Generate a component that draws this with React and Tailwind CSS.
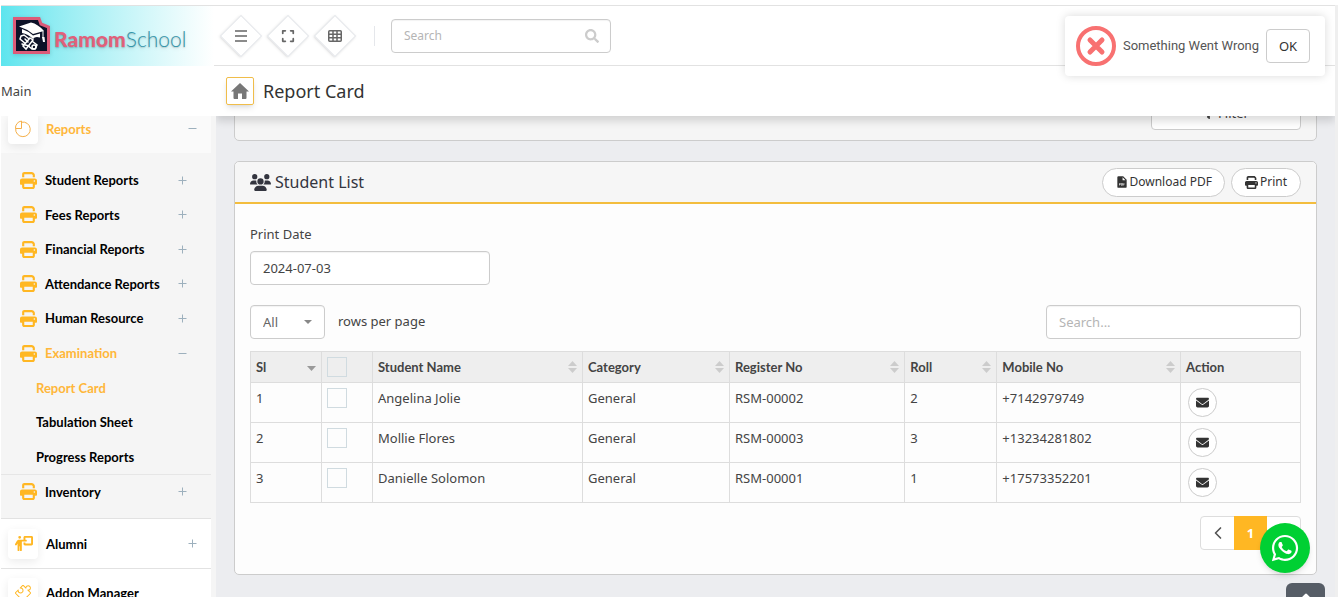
import React from 'react'
import { FaUsers, FaPrint, FaWhatsapp, FaEnvelope, FaPersonChalkboard, FaExpand } from 'react-icons/fa6'
import { FaSearch, FaFilter } from 'react-icons/fa'
import { BiSolidFilePdf } from 'react-icons/bi'
import { SlPuzzle } from 'react-icons/sl'
import { LuChevronLeft, LuChevronRight, LuChevronUp } from 'react-icons/lu'

const subMenu = [
  { name: 'Student Reports', sign: '+' },
  { name: 'Fees Reports', sign: '+' },
  { name: 'Financial Reports', sign: '+' },
  { name: 'Attendance Reports', sign: '+' },
  { name: 'Human Resource', sign: '+' },
  { name: 'Examination', sign: '-', active: true },
  { name: 'Report Card', child: true, active: true },
  { name: 'Tabulation Sheet', child: true },
  { name: 'Progress Reports', child: true },
]

const students = [
  { sl: 1, name: 'Angelina Jolie', category: 'General', register: 'RSM-00002', roll: 2, mobile: '+7142979749' },
  { sl: 2, name: 'Mollie Flores', category: 'General', register: 'RSM-00003', roll: 3, mobile: '+13234281802' },
  { sl: 3, name: 'Danielle Solomon', category: 'General', register: 'RSM-00001', roll: 1, mobile: '+17573352201' },
]

const Logo = () => (
  <a href="#home" className="w-[213px] h-[60px] shrink-0 pl-3 flex items-center gap-1 bg-linear-to-r from-[#5ce5ee] to-white">
    <svg width="37" height="37" viewBox="0 0 37 37" className="shrink-0 drop-shadow-sm">
      <path d="M1.500 1.500H26L28 7L35.500 10V35.500H1.500Z" fill="#0d1228" stroke="#dc5b78" strokeWidth="3" />
      <path d="M6 9.500L18 5.500Q25 7 31 14L20 17Q14 12 6 9.500Z" fill="#fff" />
      <path d="M9 12Q15 14 20 18.500L27 16.500V20.500Q22 19 20 22Q15 17 9 16Z" fill="#fff" />
      <path d="M30 14V21" stroke="#fff" strokeWidth="1" />
      <path d="M29 20H31.500L32 25H30Z" fill="#fff" />
      <g stroke="#fff" strokeWidth="1.500" fill="none" strokeLinecap="round">
        <path d="M8 19L11 18L24 28L22 32L19 32L7 22Z" />
        <path d="M17 21L20 23L13 32L10 29Z" fill="#0d1228" />
        <path d="M12 22L15 25M9 27L16 29" />
        <circle cx="21" cy="30" r="2" />
      </g>
    </svg>
    <span className="pt-1.5 font-['Lato',sans-serif] text-[21px] leading-6 text-[#3495aa] font-light text-shadow-md">
      <b className="font-black text-[#e0607a]">Ramom</b>School
    </span>
  </a>
)

const MenuIcon = () => (
  <svg width="12" height="12" viewBox="0 0 12 12" stroke="currentColor" strokeWidth="1.500">
    <path d="M0 1H12M0 6H12M0 11H12" />
  </svg>
)

const GridIcon = () => (
  <svg width="14" height="12" viewBox="0 0 14 12" fill="none" stroke="currentColor" strokeWidth="1.500">
    <rect x="0.750" y="0.750" width="12.500" height="10.500" rx="1" />
    <path d="M5 1V11M9 1V11M1 4.250H13M1 7.750H13" />
  </svg>
)

const HomeIcon = () => (
  <svg width="18" height="16" viewBox="0 0 18 16" fill="currentColor">
    <path d="M9 0L18 8.500H15.500V15Q15.500 16 14.500 16H11V10.500H7V16H3.500Q2.500 16 2.500 15V8.500H0Z" />
  </svg>
)

const Diamond = ({ label, children }) => (
  <button aria-label={label} className="size-[30px] rotate-45 border border-gray-200 bg-white shadow-sm flex items-center justify-center">
    <span className="-rotate-45 text-[#666]">{children}</span>
  </button>
)

const Header = () => (
  <header className="h-[61px] shrink-0 flex items-center border-y border-[#e2e2e2] bg-white">
    <Logo />
    <div className="flex items-center gap-[17px] ml-3">
      <Diamond label="Menu"><MenuIcon /></Diamond>
      <Diamond label="Full screen"><FaExpand size={14} /></Diamond>
      <Diamond label="Shortcuts"><GridIcon /></Diamond>
    </div>
    <div className="w-px h-5 bg-gray-200 ml-6 mr-4" />
    <label className="w-[220px] h-[34px] pl-3 pr-[11px] flex items-center border border-[#ccc] rounded-sm inset-shadow-xs">
      <input aria-label="Search" placeholder="Search" className="w-full text-xs outline-none placeholder:text-[#b5b5b5]" />
      <FaSearch size={14} className="shrink-0 text-[#ccc]" />
    </label>
  </header>
)

const PieIcon = () => (
  <svg width="18" height="18" viewBox="0 0 18 18" fill="none" stroke="#f5b04a" strokeWidth="1">
    <path d="M7.500 2.200A7.300 7.300 0 1 1 1.700 8.500" />
    <path d="M7.500 1V8.500H1.500A7 7 0 0 1 7.500 1Z" />
  </svg>
)

const IconBox = ({ children }) => (
  <span className="size-[30px] shrink-0 rounded-sm bg-white shadow-[0_3px_10px_rgba(0,0,0,0.08)] flex items-center justify-center text-[#ffb723]">{children}</span>
)

const Sign = ({ open }) => (
  <svg width="9" height="9" viewBox="0 0 9 9" stroke="#9db0bd" strokeWidth="1" className="shrink-0">
    <path d={open ? 'M0.500 4.500H8.500' : 'M0.500 4.500H8.500M4.500 0.500V8.500'} />
  </svg>
)

const Sidebar = () => (
  <nav className="grow min-h-0 overflow-hidden bg-[#f5f5f5] font-['Lato',sans-serif] font-bold text-black">
    <div className="w-[210px]">
      <a href="#reports" className="h-[37px] pl-[7px] pr-3.5 pb-3 flex items-center gap-2 bg-[#fafafa] text-[#ffb73a]">
        <IconBox><PieIcon /></IconBox>
        <span className="grow">Reports</span>
        <Sign open />
      </a>
      <ul className="h-[311px] mt-2.5 grid auto-rows-fr">
        {subMenu.map(item => (
          <li key={item.name}>
            <a href="#menu" className={`h-full pr-6 flex items-center ${item.child ? 'pl-[35px]' : 'pl-[19px]'} ${item.active ? 'text-[#ffb73a]' : ''}`}>
              {!item.child ? <FaPrint size={17} className="mr-2 text-[#ffb723]" /> : null}
              <span className="grow">{item.name}</span>
              {item.sign ? <Sign open={item.sign === '-'} /> : null}
            </a>
          </li>
        ))}
      </ul>
      <a href="#inventory" className="h-[44px] pl-[19px] pr-6 pb-2.5 flex items-center border-t border-[#e6e6e6]">
        <FaPrint size={17} className="mr-2 text-[#ffb723]" />
        <span className="grow">Inventory</span>
        <Sign />
      </a>
      <a href="#alumni" className="h-[50px] pl-[7px] pr-3.5 flex items-center gap-2 bg-white border-t border-[#e2e2e2]">
        <IconBox><FaPersonChalkboard size={19} /></IconBox>
        <span className="grow">Alumni</span>
        <Sign />
      </a>
      <a href="#addon" className="h-12 pl-[7px] pr-3.5 flex items-center gap-2 bg-white border-t border-[#e2e2e2]">
        <IconBox><SlPuzzle size={16} /></IconBox>
        <span className="grow">Addon Manager</span>
      </a>
    </div>
  </nav>
)

const SortIcon = ({ down }) => (
  <svg width="9" height="12" viewBox="0 0 9 12" className="shrink-0">
    {!down ? <path d="M0 5L4.500 0L9 5Z" fill="#ccc" /> : null}
    {down ? <path d="M0 5L4.500 10L9 5Z" fill="#999" /> : <path d="M0 7L4.500 12L9 7Z" fill="#ccc" />}
  </svg>
)

const Th = ({ children, width, sort }) => (
  <th className={`h-[31px] px-[5px] border border-[#ddd] text-left font-bold ${width}`}>
    <div className="flex items-center justify-between">
      {children}
      {sort ? <SortIcon down={sort === 'down'} /> : null}
    </div>
  </th>
)

const Check = ({ label }) => (
  <input type="checkbox" aria-label={label} className="block size-5 appearance-none border border-[#d0dbe0] bg-transparent" />
)

const StudentTable = () => (
  <table className="w-full table-fixed border-collapse">
    <thead className="bg-[#eee] font-['Lato',sans-serif]">
      <tr>
        <Th width="w-[71px]" sort="down">Sl</Th>
        <Th width="w-[51px]"><Check label="Select all" /></Th>
        <Th width="w-[20%]" sort="both">Student Name</Th>
        <Th width="w-[14%]" sort="both">Category</Th>
        <Th width="w-[16.700%]" sort="both">Register No</Th>
        <Th width="w-[92px]" sort="both">Roll</Th>
        <Th width="w-[17.500%]" sort="both">Mobile No</Th>
        <Th width="w-auto">Action</Th>
      </tr>
    </thead>
    <tbody>
      {students.map(student => (
        <tr key={student.sl} className="h-10 align-top *:border *:border-[#ddd] *:px-[5px] *:py-[5px]">
          <td>{student.sl}</td>
          <td><Check label={`Select ${student.name}`} /></td>
          <td>{student.name}</td>
          <td>{student.category}</td>
          <td>{student.register}</td>
          <td>{student.roll}</td>
          <td>{student.mobile}</td>
          <td>
            <button aria-label="Send email" className="size-[29px] ml-0.5 rounded-full border border-[#ccc] bg-white flex items-center justify-center text-[#333]">
              <FaEnvelope size={13} />
            </button>
          </td>
        </tr>
      ))}
    </tbody>
  </table>
)

const Pagination = () => (
  <div className="mt-[13px] flex justify-end">
    <div className="w-[101px] h-[34px] grid grid-cols-3 border border-[#ddd] rounded-sm bg-white text-[#555]">
      <button aria-label="Previous page" className="flex items-center justify-center"><LuChevronLeft size={20} /></button>
      <button className="-my-px bg-[#ffb723] text-white font-bold">1</button>
      <button aria-label="Next page" className="flex items-center justify-center"><LuChevronRight size={20} /></button>
    </div>
  </div>
)

const StudentList = () => (
  <section className="border border-[#ccc] rounded-[5px] bg-[#fdfdfd]">
    <div className="h-[42px] px-[15px] flex items-center border-b-2 border-[#f3bd3e] bg-[#f6f6f6] rounded-t-[5px]">
      <FaUsers size={21} className="mr-1 text-[#33353f]" />
      <h2 className="grow text-base text-[#33353f]">Student List</h2>
      <div className="flex gap-1.5 text-xs text-[#333]">
        <button className="h-[29px] px-3 flex items-center rounded-full border border-[#ccc] bg-white"><BiSolidFilePdf size={14} />Download PDF</button>
        <button className="h-[29px] px-[13px] flex items-center gap-0.5 rounded-full border border-[#ccc] bg-white"><FaPrint size={13} />Print</button>
      </div>
    </div>
    <div className="px-[15px] pt-5 pb-6">
      <label htmlFor="print-date" className="block mb-[7px] leading-5">Print Date</label>
      <input id="print-date" defaultValue="2024-07-03" className="block w-[240px] h-[34px] px-3 border border-[#ccc] rounded-sm bg-white inset-shadow-xs" />
      <div className="mt-5 mb-3 flex items-center justify-between">
        <div className="flex items-center gap-[13px]">
          <div className="w-[75px] h-[34px] px-3 flex items-center border border-[#ccc] rounded-sm bg-white inset-shadow-xs">
            <select id="rows" className="grow appearance-none text-[#666] outline-none"><option>All</option></select>
            <svg width="8" height="4" viewBox="0 0 8 4"><path d="M0 0H8L4 4Z" fill="#888" /></svg>
          </div>
          <label htmlFor="rows" className="pb-0.5">rows per page</label>
        </div>
        <input aria-label="Search students" placeholder="Search..." className="w-[255px] h-[34px] px-3 border border-[#ccc] rounded-sm bg-white inset-shadow-xs placeholder:text-[#b5b5b5]" />
      </div>
      <StudentTable />
      <Pagination />
    </div>
  </section>
)

const FilterFooter = () => (
  <section className="-mt-9 mb-5 h-[61px] pl-4 pr-[15px] pb-2.5 flex items-end justify-end border border-[#ccc] rounded-[5px] bg-[#f5f5f5]">
    <button className="w-[150px] h-[34px] flex items-center justify-center gap-1 border border-[#ccc] rounded-sm bg-white"><FaFilter size={11} />Filter</button>
  </section>
)

const Toast = () => (
  <div role="alert" className="absolute top-4 right-[13px] z-20 w-[260px] h-[60px] pl-[11px] pr-[15px] flex items-center justify-between rounded-sm bg-white shadow-[0_0_10px_rgba(0,0,0,0.15)]">
    <svg width="40" height="40" viewBox="0 0 40 40" fill="none" stroke="#f87171" className="shrink-0">
      <circle cx="20" cy="20" r="18" strokeWidth="4" />
      <path d="M14 14L26 26M26 14L14 26" strokeWidth="5" strokeLinecap="round" />
    </svg>
    <span className="font-['Roboto',sans-serif] text-[13px] text-[#555] whitespace-nowrap">Something Went Wrong</span>
    <button className="w-11 h-[34px] border border-[#ccc] rounded-sm bg-white text-[#333]">OK</button>
  </div>
)

const App = () => (
  <div className="relative h-screen overflow-hidden pt-[5px] pl-px flex flex-col bg-white font-['Noto_Sans',sans-serif] text-[13px] leading-5 text-[#444]">
    <div className="grow min-h-0 flex flex-col border-r-3 border-[#efefef]">
      <Header />
      <div className="grow min-h-0 flex">
        <div className="w-[215px] shrink-0 flex flex-col">
          <div className="h-[50px] shrink-0 flex items-center">Main</div>
          <Sidebar />
        </div>
        <div className="grow min-w-0 flex flex-col overflow-hidden">
          <div className="relative z-10 h-[50px] shrink-0 pl-2.5 flex items-center gap-[9px] bg-white shadow-[0_5px_8px_rgba(0,0,0,0.14)]">
            <a href="#home" aria-label="Home" className="size-7 flex items-center justify-center border border-[#f0bd4a] rounded-xs text-[#777] shadow-md"><HomeIcon /></a>
            <h1 className="text-lg text-[#333]">Report Card</h1>
          </div>
          <main className="grow min-h-0 overflow-hidden bg-[#ecedf0] px-[18px]">
            <FilterFooter />
            <StudentList />
          </main>
        </div>
      </div>
    </div>
    <Toast />
    <a href="#whatsapp" aria-label="WhatsApp" className="absolute right-7 bottom-6 size-[50px] rounded-full bg-[#00d033] text-white shadow-md flex items-center justify-center"><FaWhatsapp size={30} /></a>
    <a href="#top" aria-label="Back to top" className="absolute right-[13px] bottom-0 w-[39px] h-3.5 pt-1.5 overflow-hidden rounded-t-md bg-[#565d66] text-white flex justify-center"><LuChevronUp size={16} strokeWidth={4} className="shrink-0" /></a>
  </div>
)

export default App
